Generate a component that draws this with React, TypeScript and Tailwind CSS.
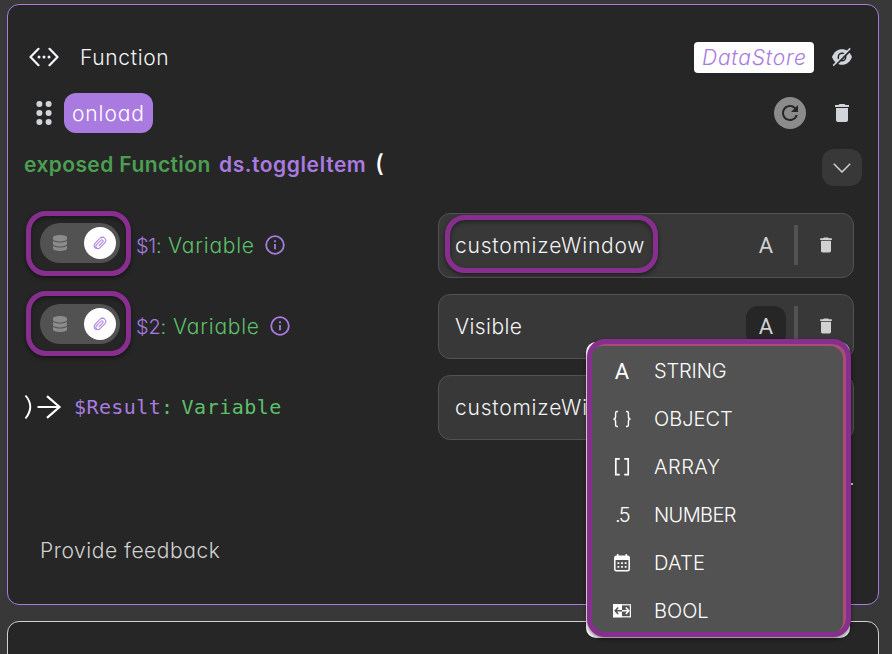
import React from "react";
import { MdDelete, MdRefresh } from "react-icons/md";
import { FaDatabase } from "react-icons/fa6";

const FunctionIcon = () => (
  <svg width="30" height="20" viewBox="0 0 30 20" fill="none" stroke="#f3f4f6" strokeWidth="2.2" strokeLinecap="round" strokeLinejoin="round">
    <path d="M9.5 1.8 1.5 10l8 8.2M20.5 1.8l8 8.2-8 8.2" />
    <g fill="#f3f4f6" stroke="none">
      <circle cx="10" cy="10" r="1.5" />
      <circle cx="15" cy="10" r="1.5" />
      <circle cx="20" cy="10" r="1.5" />
    </g>
  </svg>
);

const GripIcon = () => (
  <svg width="16" height="26" viewBox="0 0 16 26" fill="#d1d5db">
    {[4, 13, 22].map((y) => (
      <g key={y}>
        <circle cx="3.4" cy={y} r="3" />
        <circle cx="12.6" cy={y} r="3" />
      </g>
    ))}
  </svg>
);

const HiddenIcon = () => (
  <svg width="20" height="20" viewBox="0 0 20 20" fill="none">
    <path d="M0 10C2 4.8 5.6 2.2 10 2.2S18 4.8 20 10c-2 5.200-5.600 7.800-10 7.800S2 15.200 0 10Z" fill="#d1d5db" />
    <circle cx="10" cy="10" r="3.700" stroke="#262626" strokeWidth="1.500" />
    <path d="M2.500 19.300 19.500 2.300" stroke="#262626" strokeWidth="2" />
    <path d="M1.200 18.600 18.200 1.400" stroke="#d1d5db" strokeWidth="1.500" />
  </svg>
);

const ClipIcon = () => (
  <svg width="14" height="14" viewBox="0 0 14 14" fill="none" stroke="#a97be0" strokeWidth="1" strokeLinecap="round">
    <g transform="rotate(45 7 7)">
      <path d="M3.700 8V3.600a3.300 3.300 0 0 1 6.600 0v7a2.200 2.200 0 0 1-4.500 0V4.300a1.200 1.200 0 0 1 2.400 0V9.800M3.700 7v3.700a3.300 3.300 0 0 0 4.500 3" />
    </g>
  </svg>
);

const InfoIcon = () => (
  <svg width="20" height="20" viewBox="0 0 20 20" fill="none" stroke="#a97be0" strokeWidth="1.800">
    <circle cx="10" cy="10" r="8.800" />
    <path d="M10 9v5.200M10 5.300v2" />
  </svg>
);

const BracesIcon = () => (
  <svg width="20" height="18" viewBox="0 0 20 18" fill="none" stroke="#fff" strokeWidth="1.400">
    <path d="M6 1.500H5Q3.600 1.500 3.600 3v3.500Q3.600 9 1.500 9q2.100 0 2.100 2.500V15q0 1.500 1.400 1.500h1M14 1.500h1q1.400 0 1.400 1.500v3.500q0 2.500 2.100 2.500-2.100 0-2.100 2.500V15q0 1.500-1.400 1.500h-1" />
  </svg>
);

const BracketsIcon = () => (
  <svg width="16" height="20" viewBox="0 0 16 20" fill="none" stroke="#fff" strokeWidth="1.700">
    <path d="M5.800 1.800H1.800v15.800h4M10.200 1.800h4v15.800h-4" />
  </svg>
);

const CalendarIcon = () => (
  <svg width="16" height="18" viewBox="0 0 16 18" fill="none">
    <path d="M3.700 0v3M12.300 0v3" stroke="#fff" strokeWidth="1.500" />
    <rect x=".8" y="2.300" width="14.400" height="14.500" rx="1.500" stroke="#fff" strokeWidth="1.500" />
    <path d="M1 2.500h14v3.500H1z" fill="#fff" />
    <path d="M3.500 9.200h9M3.500 12.800h9" stroke="#fff" strokeWidth="1.700" strokeDasharray="1.800 1.800" />
  </svg>
);

const BoolIcon = () => (
  <svg width="18" height="14" viewBox="0 0 18 14" fill="none">
    <rect x=".6" y=".8" width="16.800" height="12" stroke="#fff" strokeWidth="1.200" />
    <path d="M0 .2h9v13H0z" fill="#fff" />
    <path d="M9 6.800H2.300M5.200 3.600 2.200 6.800l3 3.200" stroke="#525252" strokeWidth="1.500" />
    <path d="M9 6.800h6.700M12.800 3.600l3 3.200-3 3.200" stroke="#fff" strokeWidth="1.500" />
  </svg>
);

const LetterA = () => <span className="pt-px font-['Roboto',sans-serif] text-[22px] leading-5 font-normal">A</span>;

const menu = [
  { label: "STRING", cls: "tracking-[-0.15px]", icon: <LetterA /> },
  { label: "OBJECT", cls: "tracking-[0px]", icon: <BracesIcon /> },
  { label: "ARRAY", cls: "tracking-[0.5px]", icon: <BracketsIcon /> },
  { label: "NUMBER", cls: "tracking-[-0.6px]", icon: <span className="text-[20px] leading-5 tracking-[-1.5px]">.5</span> },
  { label: "DATE", cls: "tracking-[0.2px]", icon: <CalendarIcon /> },
  { label: "BOOL", cls: "tracking-[0px]", icon: <BoolIcon /> },
];

const ring = "pointer-events-none absolute border-[5px] border-[#872e8f] shadow-[0_2px_4px_rgba(0,0,0,0.5),inset_0_2px_4px_rgba(0,0,0,0.4)]";

function Source({ name, offset, width }: { name: string; offset: string; width: string }) {
  return (
    <div className="flex h-[65px] items-center">
      <div className="relative mb-[5px] ml-8 flex h-10 w-20 shrink-0 items-center rounded-full bg-[#525252]">
        <FaDatabase className="ml-3 h-4 w-4 text-[#8b8b8b]" />
        <span className="ml-4 flex size-8 items-center justify-center rounded-full bg-white">
          <ClipIcon />
        </span>
        <div className={`${ring} ${offset} -left-[14px] h-[65px] w-[105px] rounded-[20px]`} />
      </div>
      <span className="mb-px ml-4 flex items-center whitespace-pre text-[#5dc06a]">
        <span className={`pt-[2px] ${width}`}>
          <span className="text-[#a97be0]">{name}</span>:
        </span>
        <span className="w-[97px] pt-[2px] text-[21px] tracking-[0.75px]">Variable</span>
        <InfoIcon />
      </span>
    </div>
  );
}

function Field({ value, active, marked, cls }: { value: string; active?: boolean; marked?: boolean; cls: string }) {
  return (
    <div className="relative flex h-[65px] w-[416px] shrink-0 items-center rounded-xl border border-[#525252] bg-[#383838] pr-[17px] pb-px pl-4">
      <span className={`flex-1 pt-[2px] text-[21px] ${cls}`}>{value}</span>
      <span className={`flex size-10 items-center justify-center rounded-xl text-[#d1d1d1] ${active ? "bg-[#262626]" : ""}`}>
        <LetterA />
      </span>
      <span className="ml-2 h-10 w-1 bg-[#525252]" />
      <MdDelete className="ml-[18px] size-[20px] text-[#d1d1d1]" />
      {marked && <div className={`${ring} top-px left-[6px] h-[58px] w-[213px] rounded-[20px]`} />}
    </div>
  );
}

export default function App() {
  return (
    <main className="relative h-[654px] w-[892px] overflow-hidden bg-[#383838] px-[7px] pt-1 font-['Inter',sans-serif] text-[20px] leading-8 font-[350] text-[#f3f4f6] [font-feature-settings:'cv11']">
      <section className="h-[601px] w-[872px] rounded-xl border border-[#a97be0] bg-[#262626]">
        <header className="mt-9 flex h-8 items-center pr-[26px] pl-[21px]">
          <FunctionIcon />
          <h1 className="ml-[21px] flex-1 pt-px text-[21px] tracking-[0.65px]">Function</h1>
          <span className="mr-[18px] flex h-[31px] w-[120px] items-center rounded bg-white pt-[2px] pl-2 text-[21px] tracking-[0.8px] text-[#a97be0] italic">DataStore</span>
          <HiddenIcon />
        </header>
        <div className="mt-5 flex h-10 items-center pr-6 pl-7">
          <GripIcon />
          <span className="ml-3 flex h-10 w-[89px] items-center rounded-xl bg-[#a97be0] pt-px pl-2 text-[21px] tracking-[0.9px] text-white">onload</span>
          <span className="mr-6 ml-auto flex size-8 items-center justify-center rounded-full bg-[#8b8b8b] text-[#262626]">
            <MdRefresh className="size-6" />
          </span>
          <MdDelete className="size-6 text-[#d1d5db]" />
        </div>
        <div className="mt-4 flex h-[37px] items-start pr-4 pl-4 text-[21px]">
          <span className="w-[195px] font-semibold tracking-[0.4px] whitespace-nowrap text-[#4c9f52]">exposed Function</span>
          <span className="w-[156px] font-semibold tracking-[0.55px] text-[#a97be0]">ds.toggleItem</span>
          <span className="text-[24px] leading-[30px] font-medium text-white">(</span>
          <span className="ml-auto flex h-[37px] w-10 items-center justify-center rounded-xl bg-[#383838]">
            <svg width="18" height="10" viewBox="0 0 18 10" fill="none" stroke="#d1d1d1" strokeWidth="1.500">
              <path d="m.8.800 8.200 8.200L17.200.800" />
            </svg>
          </span>
        </div>
        <div className="mt-[27px] flex justify-between pr-6">
          <Source name="$1" offset="-top-3" width="w-8 tracking-[-0.3px]" />
          <Field value="customizeWindow" marked cls="tracking-[0.8px]" />
        </div>
        <div className="mt-4 flex justify-between pr-6">
          <Source name="$2" offset="-top-[13px]" width="w-[37px] tracking-[-0.2px]" />
          <Field value="Visible" active cls="tracking-[0.4px]" />
        </div>
        <div className="mt-4 flex justify-between pr-6">
          <div className="flex h-[63px] items-center pl-4 font-['DejaVu_Sans_Mono',monospace] font-normal">
            <svg width="38" height="26" viewBox="0 0 38 26" fill="none" stroke="#fff" strokeWidth="2.200">
              <path d="M1.500 1.500q9.500 11 0 23" strokeWidth="1.900" />
              <path d="M13.500 13h22M23 2.200 35.500 13 23 23.800" />
            </svg>
            <span className="ml-3 tracking-[0.4px] text-[#a97be0]">$Result</span>
            <span className="tracking-[0.4px] text-[#5dc06a]">:</span>
            <span className="ml-2 tracking-[0.5px] text-[#5dc06a]">Variable</span>
          </div>
          <Field value="customizeWindow" cls="tracking-[0.8px]" />
        </div>
        <div className="mt-[43px] mr-[25px] ml-auto size-[2px] bg-[#d1d1d1]" />
        <p className="mt-[50px] ml-8 text-[21px] tracking-[0.55px] text-[#d1d1d1]">Provide feedback</p>
      </section>
      <section className="mt-4 h-20 w-[872px] rounded-xl border border-[#d1d1d1] bg-[#262626]" />

      <div className="absolute top-[342px] left-[586px] h-[296px] w-[264px] rounded-[10px] bg-white">
        <ul className="absolute -top-[3px] left-px h-[298px] w-[264px] rounded-[18px] border-[5px] border-[#872e8f] bg-[#525252] pt-[3px] shadow-[0_2px_4px_rgba(0,0,0,0.5),inset_-3px_2px_0_#a94c78]">
          {menu.map((m) => (
            <li key={m.label} className="flex h-12 items-center text-white">
              <span className="ml-4 flex w-[28px] items-center justify-center">{m.icon}</span>
              <span className={`ml-[18px] ${m.cls}`}>{m.label}</span>
            </li>
          ))}
        </ul>
      </div>
    </main>
  );
}
